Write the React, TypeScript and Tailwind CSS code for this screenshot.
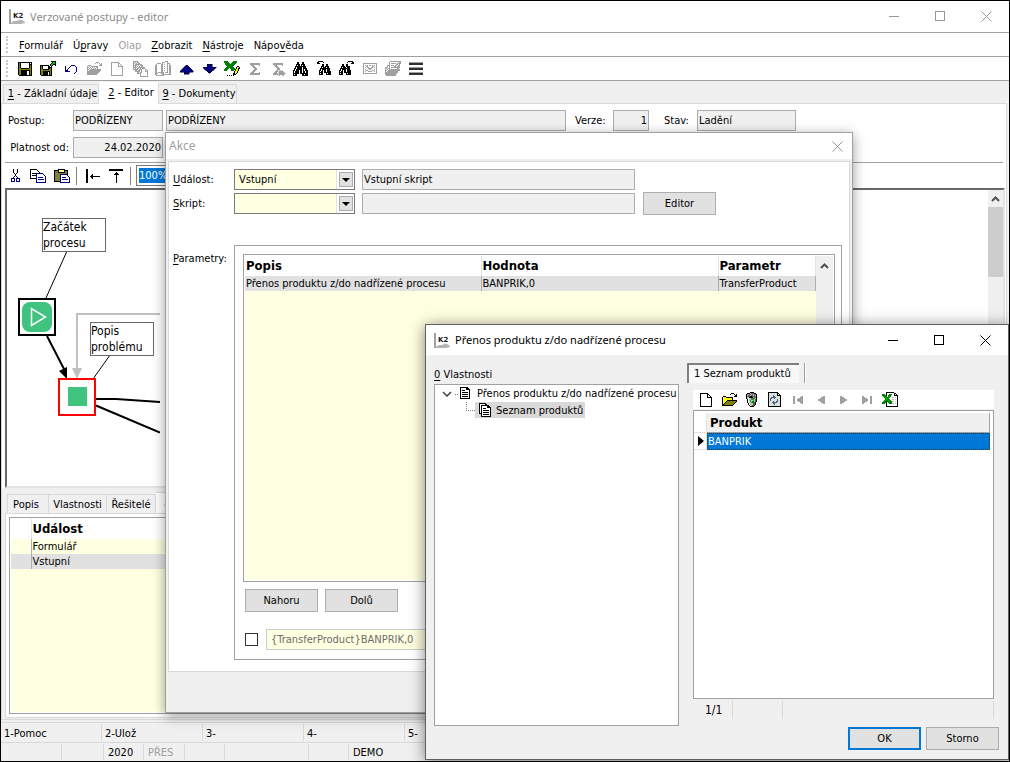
import { clsx } from "clsx";
import type { ReactNode } from "react";

const U = ({ children }: { children: ReactNode }) => (
  <span className="underline underline-offset-2">{children}</span>
);

const Glyph = ({ children, size = 16 }: { children: ReactNode; size?: number }) => (
  <svg
    width={size}
    height={size}
    viewBox={`0 0 ${size} ${size}`}
    shapeRendering="crispEdges"
    aria-hidden="true"
    className="block shrink-0"
  >
    {children}
  </svg>
);

// small bitmap icons, one character per pixel
const palette: Record<string, string> = {
  "#": "#000000",
  g: "#a0a0a0",
  n: "#000080",
  G: "#008000",
  l: "#00c000",
  y: "#ffff00",
  o: "#808000",
  w: "#ffffff",
  s: "#c0c0c0",
  d: "#606060",
  b: "#505a90",
  e: "#d8e4d8",
};

const Bits = ({ rows }: { rows: string[] }) => (
  <Glyph>
    {rows.flatMap((row, y) =>
      row
        .split("")
        .map((c, x) =>
          palette[c] ? <rect key={`${x}-${y}`} x={x} y={y} width="1" height="1" fill={palette[c]} /> : null
        )
    )}
  </Glyph>
);

const save = [
  "................",
  ".##############.",
  ".#o#wwwwwwww#w#.",
  ".#o#wwwwwwww###.",
  ".#o#wwwwwwww#o#.",
  ".#o#wwwwwwww#o#.",
  ".#o#wwwwwwww#o#.",
  ".#oo########oo#.",
  ".#oooooooooooo#.",
  ".#oo#########o#.",
  ".#oo######ww#o#.",
  ".#oo######ww#o#.",
  ".#oo######ww#o#.",
  ".#oo######ww#o#.",
  "..#############.",
  "................",
];

const saveAs = [
  "...........#####",
  "............#ll#",
  "...........#lll#",
  "..........#ll###",
  "#########.#l#..#",
  "#o#wwwww##.#....",
  "#o#wwwww####....",
  "#o#wwwww##o#....",
  "#oo######oo#....",
  "#oooooooooo#....",
  "#oo#######o#....",
  "#oo#####w#o#....",
  "#oo#####w#o#....",
  "#oo#####w#o#....",
  ".###########....",
  "................",
];

const undo = [
  "................",
  "................",
  "................",
  "................",
  "........nnnn....",
  "..n....n....n...",
  "..n...n......n..",
  "..n..n.......n..",
  "..n.n........n..",
  "..nnn........n..",
  "..nnnnn......n..",
  "............n...",
  "...........n....",
  "................",
  "................",
  "................",
];

const folderGray = [
  "................",
  "..........ggg...",
  ".........g...g.g",
  "..............gg",
  "..ggg........ggg",
  ".g.g.ggggggg....",
  ".gg.g.g.g.gg....",
  ".g.g.g.g.g.g....",
  ".gg.ggggggggggg.",
  ".g.gggggggggggg.",
  ".ggggggggggggg..",
  ".gggggggggggg...",
  ".ggggggggggg....",
  ".gggggggggg.....",
  "................",
  "................",
];

const folder = [
  "................",
  "..........###...",
  ".........#...#.#",
  "..............##",
  "..###........###",
  ".#yyy#######....",
  ".#yyyyyyyyy#....",
  ".#yyyyyyyyy#....",
  ".#yyyy##########",
  ".#yyy#ooooooooo#",
  ".#yy#ooooooooo#.",
  ".#y#ooooooooo#..",
  ".##ooooooooo#...",
  ".###########....",
  "................",
  "................",
];

const copyGray = [
  ".ggggg..........",
  ".g.g.gg.........",
  ".gg.g.gg........",
  ".g.ggggggg......",
  ".gggg.g.ggg.....",
  ".g.g.g.g.gg.....",
  ".gggg.ggggggg...",
  ".g.g.gg.g.ggg...",
  ".ggggg.ggg...gg.",
  "...gg.gg.g...g.g",
  "...ggggg.g...ggg",
  ".....gg.gg.....g",
  ".....gggg......g",
  "........g......g",
  "........g......g",
  "........gggggggg",
];

const bookGray = [
  "..........ggg...",
  ".......ggg..g...",
  "..gggg.g....ggg.",
  ".g....gg.g..g.g.",
  "gg....gg....g.gg",
  "gg....gg.g..g.gg",
  "gg....gg....g.gg",
  "gg....gg.g..g.gg",
  "gg....gg....g.gg",
  "gg....gg.g..g.gg",
  "gg....gg....g.gg",
  "gg.gggggg.ggg.gg",
  "ggg...ggg.....gg",
  "gg.....ggggggggg",
  ".gggggggg.......",
  "................",
];

const excelEdit = [
  "GGGG.....GGGG...",
  "GGGGG...GGGGG...",
  ".GGGGG.GGGGG....",
  ".GGGGGGGGGG.....",
  "..GGGGGGGG......",
  "...GGGGGG....##.",
  "..GGGGGGGG..#yy#",
  ".GGGG.GGGGG.#y##",
  "GGGG...GGGG#yy#.",
  "GGG....GGG.#yy#.",
  "..........#yy#..",
  "..........#yy#..",
  ".........##y#...",
  ".........###....",
  "...#.#.#.#......",
  "................",
];

const binoculars = [
  "................",
  "....##...##.....",
  "....##...##.....",
  "...####.####....",
  "...#.##.#.##....",
  "..###########...",
  "..#.#####.###...",
  ".##.#####.####..",
  ".#.######.#.##..",
  "##.###.##.#.###.",
  "#.####.##.##.##.",
  "#.####.##.##.##.",
  "######.########.",
  "#.##.....##.###.",
  "####.....######.",
  "................",
];

const binoPrev = [
  "..#####.........",
  ".##....#........",
  ".###............",
  "......##..##....",
  "......##..##....",
  ".....###.####...",
  ".....#.###.##...",
  "....##########..",
  "....#.####.###..",
  "...##.#.##.###..",
  "...#.##.##.####.",
  "...####.#######.",
  "...#.##...#.###.",
  "...####...#####.",
  "................",
  "................",
];

const binoNext = [
  ".........#####..",
  "........#....##.",
  "............###.",
  "...##..##.......",
  "...##..##.......",
  "..####.####.....",
  "..#.###.###.....",
  ".##########.....",
  ".#.####.###.....",
  "##.#.##.####....",
  "#.##.##.####....",
  "####.#######....",
  "#.##...#.###....",
  "####...#####....",
  "................",
  "................",
];

const mailGray = [
  "................",
  "................",
  ".gggggggggggggg.",
  ".g............g.",
  ".g.g.g.gg.g.g.g.",
  ".g..gg....gg..g.",
  ".g.g.gg..gg.g.g.",
  ".g....gggg....g.",
  ".g.g...gg...g.g.",
  ".g..gg....gg..g.",
  ".g.g..gggg..g.g.",
  ".g............g.",
  ".gggggggggggggg.",
  "................",
  "................",
  "................",
];

const pagesGray = [
  ".....ggggggggggg",
  "....g.........gg",
  "....g.ggggg.gggg",
  "....g......gg.g.",
  "..ggg.ggg.gg.gg.",
  "..g.g....gg.ggg.",
  "ggg.g.ggggggggg.",
  "gg.gg.......gg..",
  "g.g.ggggggggggg.",
  "gg.gggggggggggg.",
  "g.ggggggggggg...",
  "ggggggggggggg...",
  "gggggggggggg....",
  "ggggggggggg.....",
  ".gggggggggg.....",
  "................",
];

const trash = [
  "......####......",
  "...###sddd##....",
  "..#dsddsdsdd#...",
  "..#sddsddsds#...",
  "..#ddd##dddd#...",
  "..#ss####sdd#...",
  "..#swssdddds#...",
  "...#wsslllsd#...",
  "...#wslsslsd#...",
  "...#wslsGGsd#...",
  "...#wsslGGd#....",
  "....#wsssdd#....",
  "....#wsssdd#....",
  ".....#wsdd#.....",
  "......####......",
  "................",
];

const refresh = [
  ".##########.....",
  ".#eeeeeeee##....",
  ".#eeeeeeee#w#...",
  ".#eeeebeee####..",
  ".#eeeebbeeeee#..",
  ".#eebbbbbeeee#..",
  ".#ebbeebeeeee#..",
  ".#ebeeeeeebee#..",
  ".#ebeeeeeebee#..",
  ".#eeeebeebbee#..",
  ".#eeebbbbbeee#..",
  ".#eeeebbeeeee#..",
  ".#eeeeebeeeee#..",
  ".#eeeeeeeeeee#..",
  ".#############..",
  "................",
];

const excel = [
  "....########....",
  "....#wwwwwww##..",
  "GGG.#wwGGGww#w#.",
  "GGGG#wGGGsww####",
  ".GlGGwGlGwwwwww#",
  "..GlGGlGwwsswsw#",
  "...GlGGwwwwwwww#",
  "...GlGGGwwsswsw#",
  "..GlGGlGGwwwwww#",
  ".GlG#GGlGGsswsw#",
  "GGGG#wGGGGwwwww#",
  "GGG.#wwGGGsswsw#",
  "....#wwwwwwwwww#",
  "....#wwwwwwwwww#",
  "....############",
  "................",
];

const docLines = [
  "................",
  "..########......",
  "..#wwwww###.....",
  "..#wwwww####....",
  "..#w###wwww#....",
  "..#wwwwwwww#....",
  "..#w######w#....",
  "..#wwwwwwww#....",
  "..#w######w#....",
  "..#wwwwwwww#....",
  "..#w######w#....",
  "..#wwwwwwww#....",
  "..##########....",
  "................",
];

const docStack = [
  "..#######.......",
  "..#wwwww##......",
  "..#w########....",
  "..#w#wwwww###...",
  "..#w#wwwww####..",
  "..#w#w###wwww#..",
  "..#w#wwwwwwww#..",
  "..#w#w######w#..",
  "..#w#wwwwwwww#..",
  "..#w#w######w#..",
  "..###wwwwwwww#..",
  "....#w######w#..",
  "....#wwwwwwww#..",
  "....##########..",
];

const NewPage = ({ color }: { color: string }) => (
  <Glyph>
    <path d="M2.5 1.5h7l4 4v9h-11zM9.5 1.5v4h4" fill="#fff" stroke={color} />
  </Glyph>
);

const Sigma = ({ bucket }: { bucket?: boolean }) => (
  <Glyph>
    <path d="M3 2h10v3h-1v-1h-6l4 4-4 4h6v-1h1v3H3v-2l4-4-4-4z" fill="#a0a0a0" />
    {bucket && <path d="M8 9h4l3 3 1 1-2 1v1h-2v-1h-2v1H8z" fill="#a0a0a0" stroke="#fff" strokeWidth="0.5" />}
  </Glyph>
);

const Up = () => (
  <Glyph>
    <path d="M8 4h1l6 6v1h-4v2H6v-2H2v-1z" fill="#000080" stroke="#000" strokeWidth="0.5" />
  </Glyph>
);

const Down = () => (
  <Glyph>
    <path d="M6 3h5v3h4v1l-6 5H8L2 7V6h4z" fill="#000080" stroke="#000" strokeWidth="0.5" />
  </Glyph>
);

const Bars = () => (
  <Glyph>
    <path d="M1 1h14v1H1zM1 6h14v1H1zM1 11h14v1H1z" fill="#a0a0a0" />
    <path d="M1 2h14v2H1zM1 7h14v2H1zM1 12h14v2H1z" fill="#303030" />
  </Glyph>
);

const Logo = () => (
  <svg width="17" height="17" viewBox="0 0 17 17" aria-hidden="true" className="block shrink-0">
    <path d="M0 1h2v15H0z" fill="#a0a0a0" />
    <path d="M2 16v-1c2-2 3-2 6-2l3-1.500 3 1 2 1.500v1l-4 1z" fill="#b4b4b4" />
    <text x="4" y="10" fontSize="7" fontWeight="900" fontFamily="DejaVu Sans" fill="#222">
      K2
    </text>
  </svg>
);

const WindowButtons = ({ tone, only }: { tone: string; only?: boolean }) => (
  <div className={clsx("flex self-stretch", tone)}>
    {!only && (
      <>
        <button aria-label="Minimalizovat" className="flex w-[46px] items-center justify-center">
          <Glyph size={11}>
            <path d="M0 5.500h10" stroke="currentColor" />
          </Glyph>
        </button>
        <button aria-label="Maximalizovat" className="flex w-[46px] items-center justify-center">
          <Glyph size={11}>
            <path d="M.5.5h9v9h-9z" fill="none" stroke="currentColor" />
          </Glyph>
        </button>
      </>
    )}
    <button
      aria-label="Zavřít"
      className={clsx("flex items-center justify-center", only ? "w-[30px]" : "w-[46px]")}
    >
      <svg width="11" height="11" viewBox="0 0 11 11" className="block">
        <path d="M.5.5l10 10M10.500.5l-10 10" fill="none" stroke="currentColor" />
      </svg>
    </button>
  </div>
);

const Grip = () => <span className="my-[3px] ml-[5px] border-l-2 border-dotted border-[#c8c8c8] self-stretch" />;

const PushButton = ({ children, primary }: { children: ReactNode; primary?: boolean }) => (
  <button
    className={clsx(
      "h-[23px] w-[73px] bg-[#e1e1e1] text-center",
      primary ? "border-2 border-[#0078d7]" : "border border-[#adadad]"
    )}
  >
    {children}
  </button>
);

const Combo = ({ id, value }: { id: string; value: string }) => (
  <div className="relative h-[21px] w-[121px] border border-[#7a7a7a] bg-[#ffffe1]">
    <select id={id} defaultValue={value} className="block h-full w-full appearance-none bg-transparent pl-1 outline-none">
      <option value={value}>{value}</option>
    </select>
    <span className="pointer-events-none absolute inset-y-0 right-0 flex w-[18px] items-center justify-center border-l border-[#e3e3e3] bg-white">
      <span className="flex h-[15px] w-[14px] items-center justify-center border border-[#adadad] bg-[#e1e1e1]">
        <svg width="8" height="4" viewBox="0 0 8 4" className="block">
          <path d="M0 0h8L4 4z" />
        </svg>
      </span>
    </span>
  </div>
);

const ScrollUp = () => (
  <svg width="9" height="6" viewBox="0 0 9 6" className="block">
    <path d="M1 5l3.500-3.500L8 5" fill="none" stroke="#505050" strokeWidth="2" />
  </svg>
);

const field = "h-[21px] border border-[#adadad] bg-[#f0f0f0] px-px outline-none";

const menu: { label: ReactNode; off?: boolean }[] = [
  { label: <><U>F</U>ormulář</> },
  { label: <>Ú<U>p</U>ravy</> },
  { label: "Olap", off: true },
  { label: <><U>Z</U>obrazit</> },
  { label: <><U>N</U>ástroje</> },
  { label: <>Nápo<U>v</U>ěda</> },
];

const tools: { name: string; icon: ReactNode }[] = [
  { name: "Uložit", icon: <Bits rows={save} /> },
  { name: "Uložit a zavřít", icon: <Bits rows={saveAs} /> },
  { name: "Zpět", icon: <Bits rows={undo} /> },
  { name: "Otevřít", icon: <Bits rows={folderGray} /> },
  { name: "Nový", icon: <NewPage color="#a0a0a0" /> },
  { name: "Kopie", icon: <Bits rows={copyGray} /> },
  { name: "Kniha", icon: <Bits rows={bookGray} /> },
  { name: "Předchozí", icon: <Up /> },
  { name: "Další", icon: <Down /> },
  { name: "Excel", icon: <Bits rows={excelEdit} /> },
  { name: "Součet", icon: <Sigma /> },
  { name: "Součty", icon: <Sigma bucket /> },
  { name: "Hledat", icon: <Bits rows={binoculars} /> },
  { name: "Hledat předchozí", icon: <Bits rows={binoPrev} /> },
  { name: "Hledat další", icon: <Bits rows={binoNext} /> },
  { name: "Pošta", icon: <Bits rows={mailGray} /> },
  { name: "Stránky", icon: <Bits rows={pagesGray} /> },
  { name: "Nabídka", icon: <Bars /> },
];

const productTools: { name: string; icon: ReactNode }[] = [
  { name: "Nový", icon: <NewPage color="#000" /> },
  { name: "Otevřít", icon: <Bits rows={folder} /> },
  { name: "Smazat", icon: <Bits rows={trash} /> },
  { name: "Obnovit", icon: <Bits rows={refresh} /> },
  { name: "První", icon: <Glyph><path d="M3 4h2v8H3zM13 4v8h-1L6 8l6-4z" fill="#a0a0a0" /></Glyph> },
  { name: "Předchozí", icon: <Glyph><path d="M12 4v8h-1L4 8l7-4z" fill="#a0a0a0" /></Glyph> },
  { name: "Další", icon: <Glyph><path d="M4 4v8h1l7-4-7-4z" fill="#a0a0a0" /></Glyph> },
  { name: "Poslední", icon: <Glyph><path d="M3 4v8h1l6-4-6-4zM11 4h2v8h-2z" fill="#a0a0a0" /></Glyph> },
  { name: "Excel", icon: <Bits rows={excel} /> },
];

const Toolbar = ({ items }: { items: { name: string; icon: ReactNode }[] }) => (
  <>
    {items.map((t) => (
      <button key={t.name} aria-label={t.name} className="flex h-full w-[23px] items-center justify-center">
        {t.icon}
      </button>
    ))}
  </>
);

const Diagram = () => (
  <div className="relative flex h-[300px] border-2 border-[#696969] border-r-[#e3e3e3] border-b-[#e3e3e3] bg-white">
    <div className="flex-1">
      <svg width="153" height="250" viewBox="7 190 153 250" className="block">
        <path d="M67 251L46 298M110 355L93 379" stroke="#000" fill="none" />
        <path d="M161 314H77v56" stroke="#c0c0c0" strokeWidth="2" fill="none" />
        <path d="M72 368h10l-5 11z" fill="#c0c0c0" />
        <path d="M47 336l17 33M96 399h20l44 3M96 405.500l64 27" stroke="#000" strokeWidth="2" fill="none" />
        <path d="M59 371l8-4v12z" />
        <rect x="19" y="299" width="36" height="36" fill="#fff" stroke="#000" strokeWidth="2" />
        <rect x="22" y="302" width="30" height="30" rx="8" fill="#40c37f" />
        <path d="M31.500 308.500v17l14-8.500z" fill="none" stroke="#fff" strokeWidth="1.500" />
        <rect x="59" y="379" width="36" height="36" fill="#fff" stroke="#f00" strokeWidth="2" />
        <rect x="68" y="387" width="19" height="19" fill="#40c37f" />
      </svg>
    </div>
    <div className="absolute top-[28px] left-[35px] h-[34px] w-[64px] border border-[#696969] bg-white text-[12px] leading-[16px]">
      Začátek procesu
    </div>
    <div className="absolute top-[132px] left-[83px] h-[34px] w-[64px] border border-[#696969] bg-white text-[12px] leading-[16px]">
      Popis problému
    </div>
    <div className="w-[15px] bg-[#f0f0f0]">
      <div className="flex h-[17px] items-center justify-center">
        <ScrollUp />
      </div>
      <div className="h-[70px] bg-[#cdcdcd]" />
    </div>
  </div>
);

const StatusCell = ({ className, children }: { className: string; children?: ReactNode }) => (
  <div className={clsx("my-px shrink-0 border-r border-[#d9d9d9]", className)}>{children}</div>
);

const MainWindow = () => (
  <div className="flex flex-1 flex-col">
    <header className="flex h-[32px] items-center border-b border-[#a0a0a0] bg-white pl-2">
      <Logo />
      <h1 className="ml-1 flex-1 font-['Noto_Sans',sans-serif] text-[11px] text-[#8c8c8c]">
        Verzované postupy - editor
      </h1>
      <WindowButtons tone="text-[#999]" />
    </header>
    <nav className="flex h-[24px] items-center border-b border-[#a0a0a0] bg-white">
      <Grip />
      <div className="ml-[11px] flex gap-[10px] pt-[3px]">
        {menu.map((m, i) => (
          <button key={i} className={m.off ? "text-[#a0a0a0]" : undefined}>
            {m.label}
          </button>
        ))}
      </div>
    </nav>
    <div className="flex h-[24px] items-center border-b border-[#a0a0a0] bg-white">
      <Grip />
      <div className="ml-[5px] flex h-full">
        <Toolbar items={tools} />
      </div>
    </div>
    <div className="flex h-[22px] items-end pl-[2px]">
      <button className="h-[19px] w-[96px] border border-b-0 border-[#d9d9d9] pl-[3px] whitespace-nowrap"><U>1</U> - Základní údaje</button>
      <button className="z-10 -mb-px h-[22px] w-[59px] bg-white pl-[5px]"><U>2</U> - Editor</button>
      <button className="h-[19px] w-[79px] border border-b-0 border-[#d9d9d9] pl-[3px] whitespace-nowrap"><U>9</U> - Dokumenty</button>
    </div>
    <main className="mr-[2px] flex flex-1 flex-col border border-[#d9d9d9] bg-white pt-[6px]">
      <div className="flex items-center">
        <label htmlFor="postup" className="w-[71px] pl-[6px]">Postup:</label>
        <input id="postup" readOnly value="PODŘÍZENY" className={clsx(field, "w-[90px]")} />
        <input aria-label="Název postupu" readOnly value="PODŘÍZENY" className={clsx(field, "ml-[3px] w-[400px]")} />
        <label htmlFor="verze" className="w-[47px] pl-[9px]">Verze:</label>
        <input id="verze" readOnly value="1" className={clsx(field, "w-[36px] text-right")} />
        <label htmlFor="stav" className="w-[48px] pl-[15px]">Stav:</label>
        <input id="stav" readOnly value="Ladění" className={clsx(field, "w-[99px]")} />
      </div>
      <div className="mt-[6px] flex items-center">
        <label htmlFor="platnost" className="w-[71px] pr-1 text-right whitespace-nowrap">Platnost od:</label>
        <input id="platnost" readOnly value="24.02.2020" className={clsx(field, "w-[90px] text-right")} />
      </div>
      <div className="mx-[3px] mt-[4px] flex h-[26px] items-center border-t border-[#a0a0a0]">
        <button aria-label="Vyjmout" className="flex w-[21px] justify-center">
          <Glyph>
            <path d="M5.500 1v3l4 6M9.500 1v3l-4 6" stroke="#000" fill="none" />
            <path d="M3.500 10.500h3v3h-3zM8.500 10.500h3v3h-3z" stroke="#000080" fill="none" />
          </Glyph>
        </button>
        <button aria-label="Kopírovat" className="flex w-[24px] justify-center">
          <Glyph>
            <path d="M.5 1.500h6l3 3v6h-9zM2 5.500h5M2 7.500h5" stroke="#000" fill="#fff" />
            <path d="M6.500 5.500h6l3 3v6h-9zM8 9.500h5M8 11.500h6" stroke="#000080" fill="#fff" />
          </Glyph>
        </button>
        <button aria-label="Vložit" className="flex w-[24px] justify-center">
          <Glyph>
            <path d="M.5 2.500h13v11H.5z" stroke="#000" fill="#808040" />
            <path d="M4 1h6v3H4z" fill="#ffff80" stroke="#000" />
            <path d="M6.500 6.500h6l3 3v5h-9zM8 9.500h4M8 11.500h6" stroke="#000080" fill="#fff" />
          </Glyph>
        </button>
        <span className="mr-[8px] ml-[2px] h-[18px] w-px bg-[#808080]" />
        <button aria-label="Zarovnat vlevo" className="flex w-[16px]">
          <Glyph>
            <path d="M1 1h2v14H1zM5 8h10v1H5zM6 7h1v3H6zM7 6h1v5H7z" />
          </Glyph>
        </button>
        <button aria-label="Zarovnat nahoru" className="ml-[7px] flex w-[16px]">
          <Glyph>
            <path d="M1 1h14v2H1zM8 4h1v11H8zM7 5h3v1H7zM6 6h5v1H6z" />
          </Glyph>
        </button>
        <span className="mr-[5px] ml-[6px] h-[18px] w-px bg-[#808080]" />
        <div className="flex h-[21px] w-[60px] border border-[#7a7a7a] bg-white p-0.5">
          <input aria-label="Měřítko" defaultValue="100%" className="w-full bg-[#0078d7] text-white outline-none" />
        </div>
      </div>
      <div className="mr-[1px] ml-[3px]">
        <Diagram />
      </div>
      <div className="flex flex-1 flex-col bg-[#f0f0f0] pt-[4px] pr-[2px] pb-[1px] pl-[3px]">
        <div className="flex h-[21px] items-end pl-[2px]">
          <button className="h-[19px] w-[42px] border border-b-0 border-[#d9d9d9] pt-px pr-1">Popis</button>
          <button className="h-[19px] w-[58px] border border-b-0 border-l-0 border-[#d9d9d9] pt-px">Vlastnosti</button>
          <button className="h-[19px] w-[49px] border border-b-0 border-l-0 border-[#d9d9d9] pt-px">Řešitelé</button>
          <button className="h-[21px] w-[42px] border border-b-0 border-l-0 border-[#d9d9d9] bg-white">Akce</button>
        </div>
        <div className="flex flex-1 border border-[#d9d9d9] bg-white p-[3px]">
          <div className="flex-1 border border-[#a0a0a0] bg-white p-px">
            <div className="h-full bg-[#ffffe1]">
              <table className="w-full border-collapse text-left">
                <thead>
                  <tr className="h-[20px] bg-white text-[13px]">
                    <th className="w-[20px] border-r border-[#e3e3e3]" />
                    <th className="pl-px font-bold">Událost</th>
                  </tr>
                </thead>
                <tbody>
                  <tr className="h-[15px]">
                    <td className="border-r border-[#adadad]" />
                    <td className="pl-px">Formulář</td>
                  </tr>
                  <tr className="h-[15px] bg-[#e1e1e1]">
                    <td className="border-r border-[#adadad]" />
                    <td className="pl-px">Vstupní</td>
                  </tr>
                </tbody>
              </table>
            </div>
          </div>
        </div>
      </div>
    </main>
    <footer className="mt-[2px] border-t border-[#d9d9d9] leading-[18px]">
      <div className="flex h-[20px] border-b border-[#d9d9d9]">
        {["1-Pomoc", "2-Ulož", "3-", "4-", "5-"].map((s) => (
          <StatusCell key={s} className="w-[101px] pt-px pl-[3px]">{s}</StatusCell>
        ))}
      </div>
      <div className="flex h-[18px]">
        <StatusCell className="w-[61px]" />
        <StatusCell className="w-[42px]" />
        <StatusCell className="w-[40px] pl-1">2020</StatusCell>
        <StatusCell className="w-[41px] pl-1 text-[#a0a0a0]">PŘES</StatusCell>
        <StatusCell className="w-[40px]" />
        <StatusCell className="w-[84px]" />
        <StatusCell className="w-[40px]" />
        <StatusCell className="w-[101px] pl-1">DEMO</StatusCell>
      </div>
    </footer>
  </div>
);

const ActionDialog = () => (
  <section className="absolute top-[131px] left-[164px] z-20 w-[688px] border border-[#a0a0a0] bg-[#f0f0f0] shadow-[0_3px_12px_rgba(0,0,0,0.4)]">
    <header className="flex h-[26px] items-center bg-white pl-[3px]">
      <h2 className="flex-1 font-['Noto_Sans',sans-serif] text-[12px] text-[#a0a0a0]">Akce</h2>
      <WindowButtons tone="text-[#999]" only />
    </header>
    <div className="mx-[2px] mt-[2px] border border-[#d9d9d9] bg-white pt-[7px] pb-[11px] pl-[4px]">
      <div className="flex h-[21px] items-center">
        <label htmlFor="udalost" className="w-[61px]"><U>U</U>dálost:</label>
        <Combo id="udalost" value="Vstupní" />
        <input aria-label="Popis události" readOnly value="Vstupní skript" className={clsx(field, "ml-[7px] w-[273px]")} />
      </div>
      <div className="mt-[2px] flex h-[23px] items-center">
        <label htmlFor="skript" className="w-[61px]"><U>S</U>kript:</label>
        <Combo id="skript" value="" />
        <input aria-label="Popis skriptu" readOnly value="" className={clsx(field, "mr-[8px] ml-[7px] w-[273px]")} />
        <PushButton>Editor</PushButton>
      </div>
      <div className="mt-[30px] flex">
        <span className="w-[61px] pt-[6px] leading-[16px] whitespace-nowrap"><U>P</U>arametry:</span>
        <div className="w-[608px] border border-[#a0a0a0] pt-[8px] pr-[6px] pb-[9px] pl-[8px]">
          <div className="flex h-[328px] border border-[#a0a0a0] p-px">
            <div className="flex-1 bg-[#ffffe1]">
              <table className="w-full table-fixed border-collapse text-left">
                <thead>
                  <tr className="h-[20px] bg-white text-[13px]">
                    <th className="w-[236px] border-r border-[#e3e3e3] pl-px font-bold">Popis</th>
                    <th className="w-[237px] border-r border-[#e3e3e3] pl-px font-bold">Hodnota</th>
                    <th className="border-r border-[#e3e3e3] pl-px font-bold">Parametr</th>
                  </tr>
                </thead>
                <tbody>
                  <tr className="h-[15px] bg-[#e1e1e1]">
                    <td className="border-r border-[#adadad] pl-px whitespace-nowrap">
                      Přenos produktu z/do nadřízené procesu
                    </td>
                    <td className="border-r border-[#adadad] pl-px">BANPRIK,0</td>
                    <td className="border-r border-[#adadad] pl-px">TransferProduct</td>
                  </tr>
                </tbody>
              </table>
            </div>
            <div className="flex w-[17px] items-start justify-center bg-[#f0f0f0] pt-[7px]">
              <ScrollUp />
            </div>
          </div>
          <div className="mt-[7px] ml-[2px] flex gap-[7px]">
            <PushButton>Nahoru</PushButton>
            <PushButton>Dolů</PushButton>
          </div>
          <div className="mt-[17px] ml-[2px] flex h-[21px] items-center">
            <input
              type="checkbox"
              aria-label="Upravit ručně"
              className="h-[13px] w-[13px] appearance-none border border-[#333] bg-white"
            />
            <input
              aria-label="Hodnota parametru"
              disabled
              value="{TransferProduct}BANPRIK,0"
              className="ml-[8px] h-[21px] flex-1 border border-[#ccc] bg-[#ffffe1] px-1 text-[#6d6d6d]"
            />
          </div>
        </div>
      </div>
    </div>
    <footer className="h-[40px]" />
  </section>
);

const ProductDialog = () => (
  <section className="absolute top-[323px] left-[424px] z-30 w-[584px] border border-[#606060] bg-[#f0f0f0] shadow-[0_2px_14px_rgba(0,0,0,0.5)]">
    <header className="flex h-[30px] items-center bg-white pl-2">
      <Logo />
      <h2 className="ml-1 flex-1 font-['Noto_Sans',sans-serif] text-[11px]">Přenos produktu z/do nadřízené procesu</h2>
      <WindowButtons tone="text-black" />
    </header>
    <div className="flex pt-[8px] pl-[8px]">
      <div className="flex w-[245px] flex-col pt-[4px]">
        <h3 className="mb-px leading-[16px]"><U>0</U> Vlastnosti</h3>
        <ul className="flex-1 border border-[#a0a0a0] bg-white pt-px">
          <li className="whitespace-nowrap">
            <div className="flex h-[16px] items-center pl-[7px]">
              <svg width="10" height="6" viewBox="0 0 10 6" className="block shrink-0">
                <path d="M1 1l4 4 4-4" fill="none" stroke="#404040" strokeWidth="1.500" />
              </svg>
              <span className="ml-[3px] w-[3px] border-t border-dotted border-[#808080]" />
              <Bits rows={docLines} />
              <span className="ml-[3px]">Přenos produktu z/do nadřízené procesu</span>
            </div>
            <ul>
              <li className="flex h-[16px] pl-[31px]">
                <span className="mb-[7px] w-[9px] border-b border-l border-dotted border-[#808080]" />
                <span className="flex items-center bg-[#d9d9d9] pt-px pr-[2px] pl-[2px]">
                  <Bits rows={docStack} />
                  <span className="ml-[3px]">Seznam produktů</span>
                </span>
              </li>
            </ul>
          </li>
        </ul>
      </div>
      <div className="mr-[14px] ml-[8px] flex-1 pb-[7px]">
        <div className="flex h-[20px] gap-[5px]">
          <button className="w-[112px] border-t-2 border-l-2 border-[#808080] border-r-white bg-[#f8f8f8] pl-[5px] text-left">
            1 Seznam produktů
          </button>
          <span className="w-[2px] border-l border-[#a0a0a0] bg-white" />
        </div>
        <div className="mt-[7px] ml-[6px]">
          <div className="flex h-[19px] items-center bg-white pl-px">
            <Toolbar items={productTools} />
          </div>
          <div className="mt-px h-[289px] border border-[#a0a0a0] bg-white pt-[2px] pr-[3px]">
            <table className="w-full border-separate border-spacing-0 text-left">
              <thead>
                <tr className="h-[20px] text-[13px]">
                  <th className="w-[13px] border-r border-b border-[#e3e3e3]" />
                  <th className="border-r border-b border-[#a0a0a0] bg-[#f0f0f0] pl-[3px] font-bold">Produkt</th>
                </tr>
              </thead>
              <tbody>
                <tr className="h-[17px]">
                  <td className="border-r border-b border-[#e3e3e3] pl-1">
                    <svg width="6" height="10" viewBox="0 0 6 10" className="block">
                      <path d="M0 0l6 5-6 5z" />
                    </svg>
                  </td>
                  <td className="border border-dotted border-[#333] bg-[#0078d7] text-white">BANPRIK</td>
                </tr>
              </tbody>
            </table>
          </div>
          <div className="mt-[2px] flex h-[18px] items-center border-r border-[#d9d9d9]">
            <span className="h-full w-[40px] border-r border-[#d9d9d9] pl-[12px] text-[12px] leading-[18px]">1/1</span>
            <span className="h-full w-[50px] border-r border-[#d9d9d9]" />
          </div>
        </div>
      </div>
    </div>
    <div className="mt-px flex justify-end gap-[5px] pr-[9px] pb-[9px]">
      <PushButton primary>OK</PushButton>
      <PushButton>Storno</PushButton>
    </div>
  </section>
);

const App = () => {
  return (
    <div className="relative flex min-h-screen w-full flex-col overflow-hidden border border-black bg-[#f0f0f0] font-['DejaVu_Sans_Condensed','Noto_Sans',sans-serif] text-[11px] leading-[14px] text-black">
      <MainWindow />
      <ActionDialog />
      <ProductDialog />
    </div>
  );
};

export default App;
